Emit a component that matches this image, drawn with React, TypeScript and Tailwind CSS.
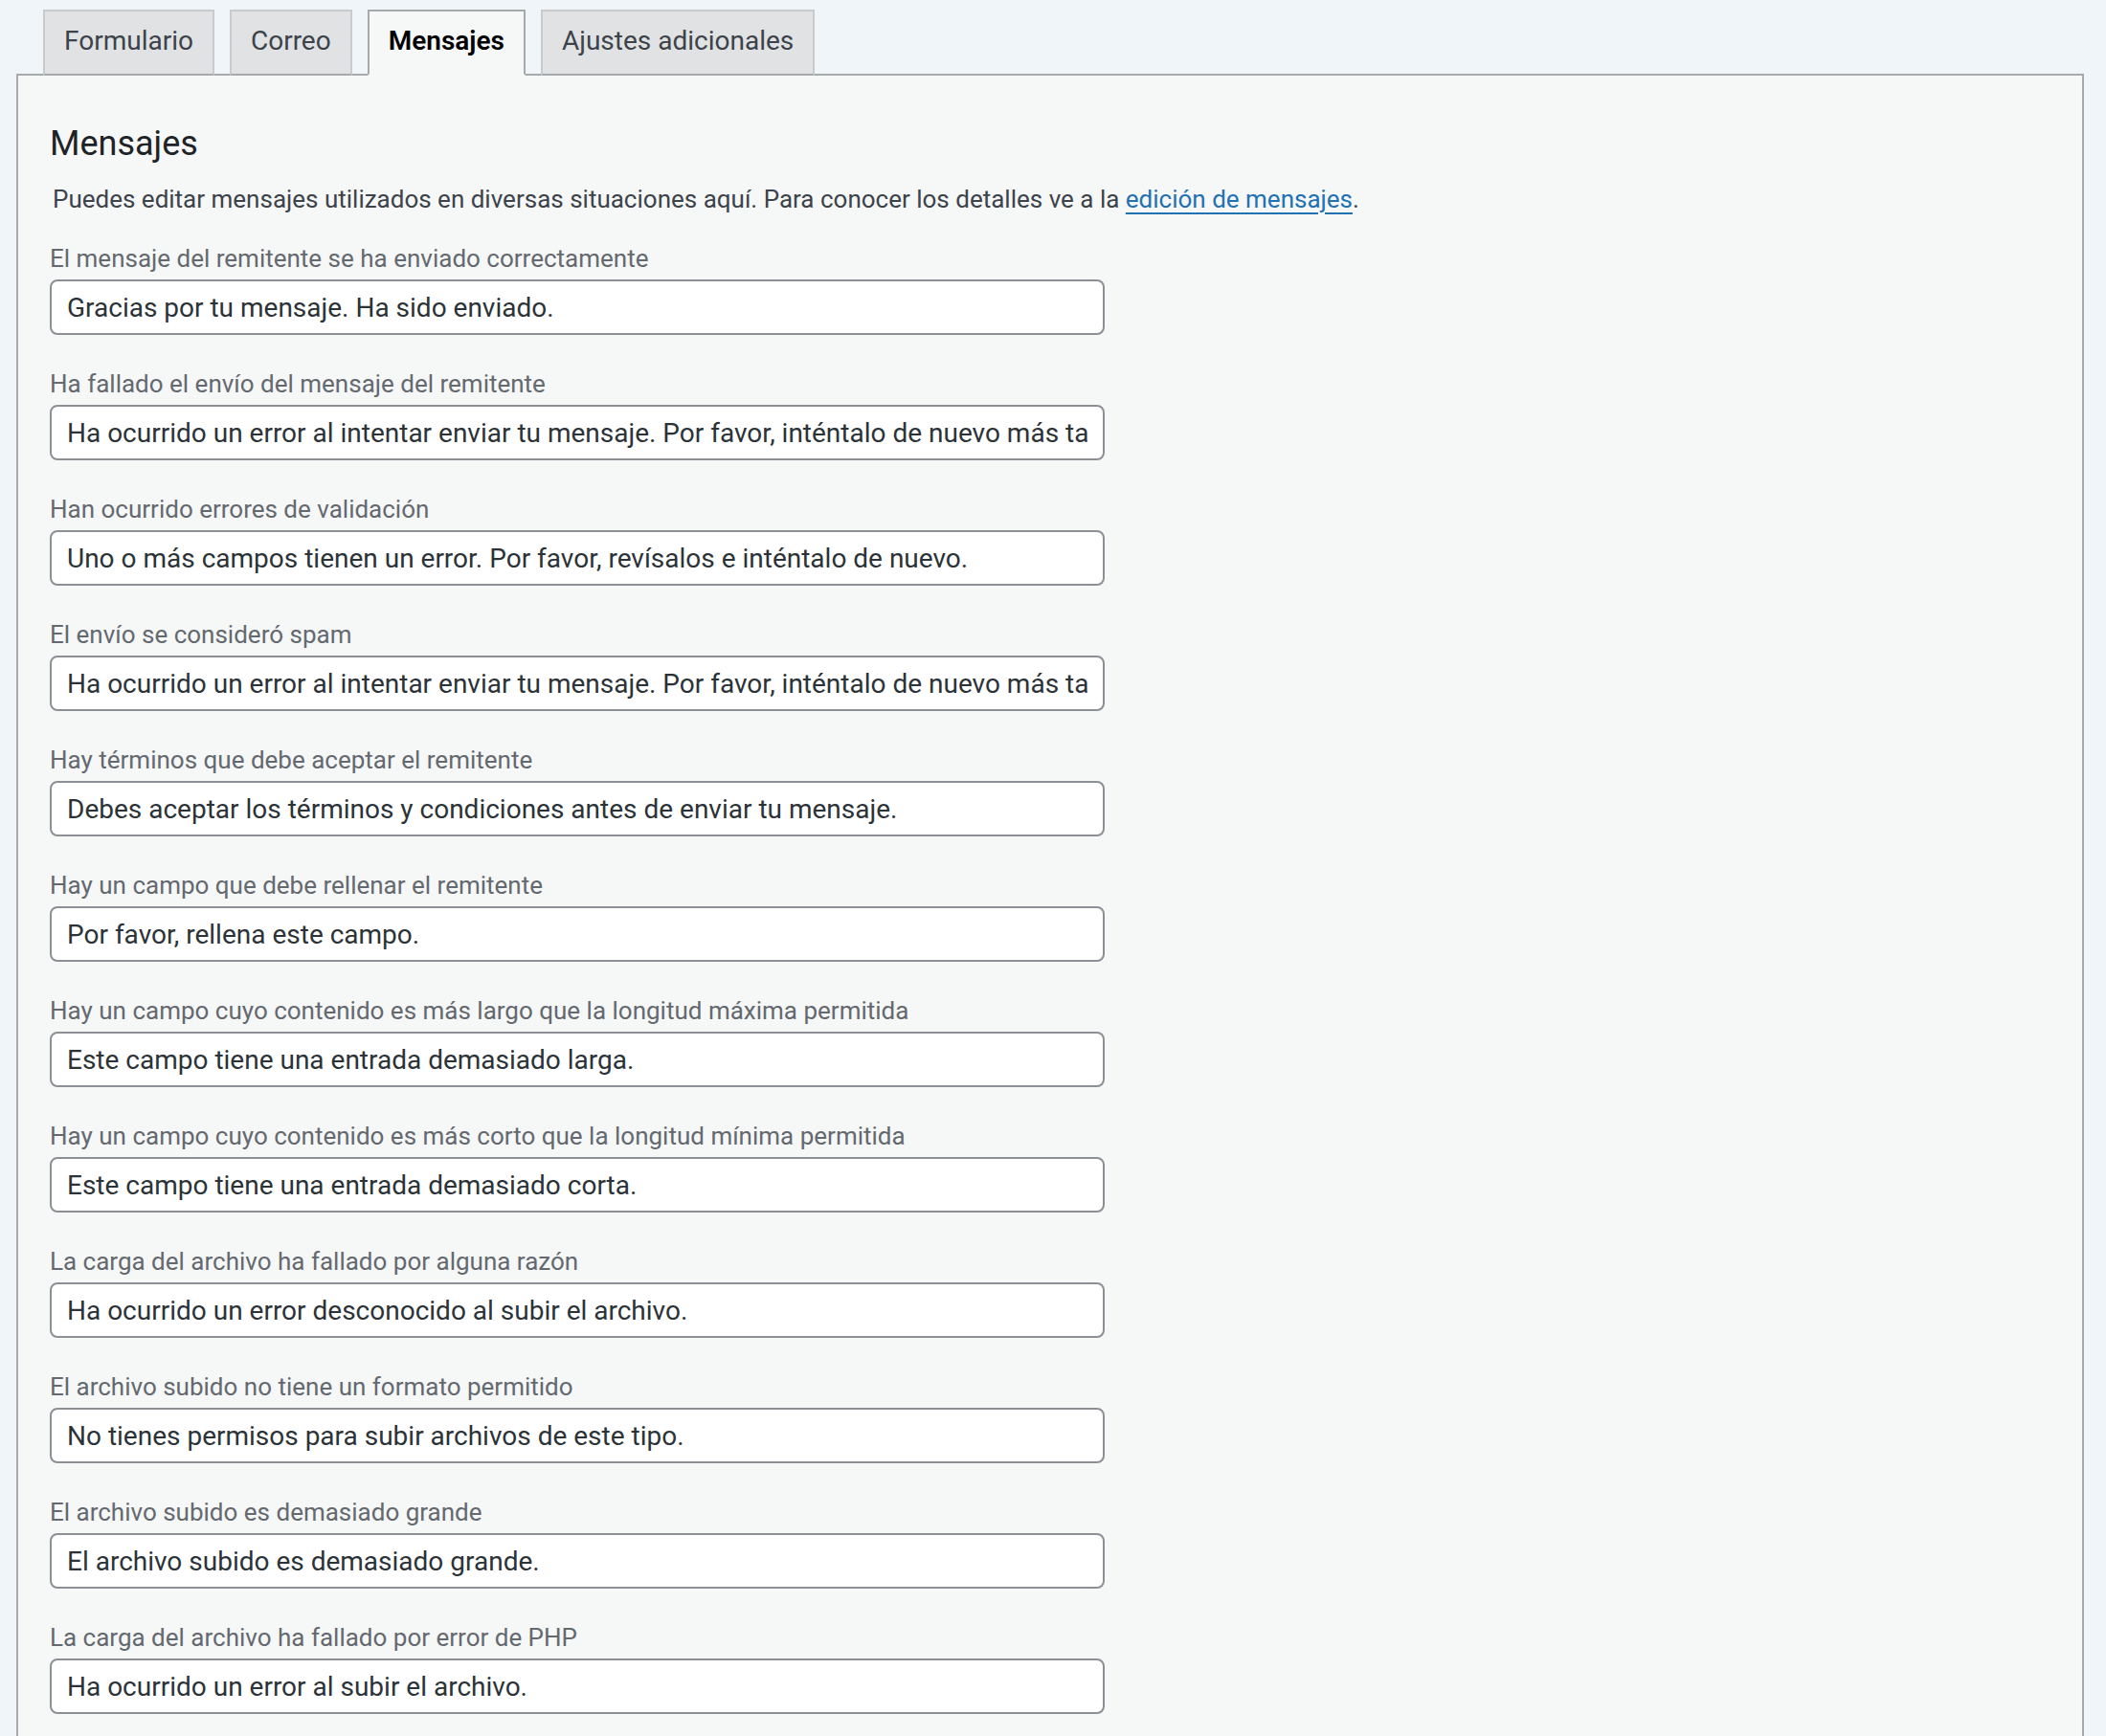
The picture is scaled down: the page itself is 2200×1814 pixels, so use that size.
import React from "react";

const tabs = ["Formulario", "Correo", "Mensajes", "Ajustes adicionales"];

const fields: { label: string; value: string }[] = [
  {
    label: "El mensaje del remitente se ha enviado correctamente",
    value: "Gracias por tu mensaje. Ha sido enviado.",
  },
  {
    label: "Ha fallado el envío del mensaje del remitente",
    value:
      "Ha ocurrido un error al intentar enviar tu mensaje. Por favor, inténtalo de nuevo más tarde.",
  },
  {
    label: "Han ocurrido errores de validación",
    value: "Uno o más campos tienen un error. Por favor, revísalos e inténtalo de nuevo.",
  },
  {
    label: "El envío se consideró spam",
    value:
      "Ha ocurrido un error al intentar enviar tu mensaje. Por favor, inténtalo de nuevo más tarde.",
  },
  {
    label: "Hay términos que debe aceptar el remitente",
    value: "Debes aceptar los términos y condiciones antes de enviar tu mensaje.",
  },
  {
    label: "Hay un campo que debe rellenar el remitente",
    value: "Por favor, rellena este campo.",
  },
  {
    label: "Hay un campo cuyo contenido es más largo que la longitud máxima permitida",
    value: "Este campo tiene una entrada demasiado larga.",
  },
  {
    label: "Hay un campo cuyo contenido es más corto que la longitud mínima permitida",
    value: "Este campo tiene una entrada demasiado corta.",
  },
  {
    label: "La carga del archivo ha fallado por alguna razón",
    value: "Ha ocurrido un error desconocido al subir el archivo.",
  },
  {
    label: "El archivo subido no tiene un formato permitido",
    value: "No tienes permisos para subir archivos de este tipo.",
  },
  {
    label: "El archivo subido es demasiado grande",
    value: "El archivo subido es demasiado grande.",
  },
  {
    label: "La carga del archivo ha fallado por error de PHP",
    value: "Ha ocurrido un error al subir el archivo.",
  },
];

export default function App() {
  return (
    <div className="min-h-screen bg-[#f0f5f9] pl-[17px] pr-[23px] pt-[10px] font-['Roboto','Liberation_Sans',sans-serif]">
      {/* Tabs */}
      <div className="relative z-10 -mb-[2px] ml-[28px] flex gap-4">
        {tabs.map((t) => {
          const active = t === "Mensajes";
          return (
            <div
              key={t}
              className={
                active
                  ? "h-[69px] border-2 border-[#a7aaad] border-b-[#f6f7f7] bg-[#f6f7f7] px-[20px] pt-[12px] text-[28px] leading-[38px] font-semibold text-black"
                  : "h-[69px] border-2 border-[#c9cacc] border-b-[#a7aaad] bg-[#e1e2e3] px-[20px] pt-[12px] text-[28px] leading-[38px] text-[#3c434a]"
              }
            >
              {t}
            </div>
          );
        })}
      </div>

      {/* Panel */}
      <div className="border-2 border-[#a7aaad] bg-[#f6f7f7] pb-10 pl-[33px]">
        <h2 className="mt-[49px] text-[36px] leading-[45px] text-[#1d2327]">Mensajes</h2>
        <p className="mt-[18px] pl-[3px] text-[26px] leading-[35px] text-[#3c434a]">
          Puedes editar mensajes utilizados en diversas situaciones aquí. Para conocer los detalles ve
          a la{" "}
          <a href="#" className="text-[#2271b1] underline underline-offset-[5px]">
            edición de mensajes
          </a>
          .
        </p>

        <div className="mt-[27px] flex flex-col gap-[34px]">
          {fields.map((f, i) => (
            <div key={i} className="flex flex-col">
              <label className="text-[26px] leading-[35px] text-[#646970]">{f.label}</label>
              <input
                type="text"
                readOnly
                defaultValue={f.value}
                className="mt-[4px] h-[58px] w-[1102px] rounded-[8px] border-2 border-[#8c8f94] bg-white px-4 text-[28px] text-[#2c3338] outline-none"
              />
            </div>
          ))}
        </div>
      </div>
    </div>
  );
}
